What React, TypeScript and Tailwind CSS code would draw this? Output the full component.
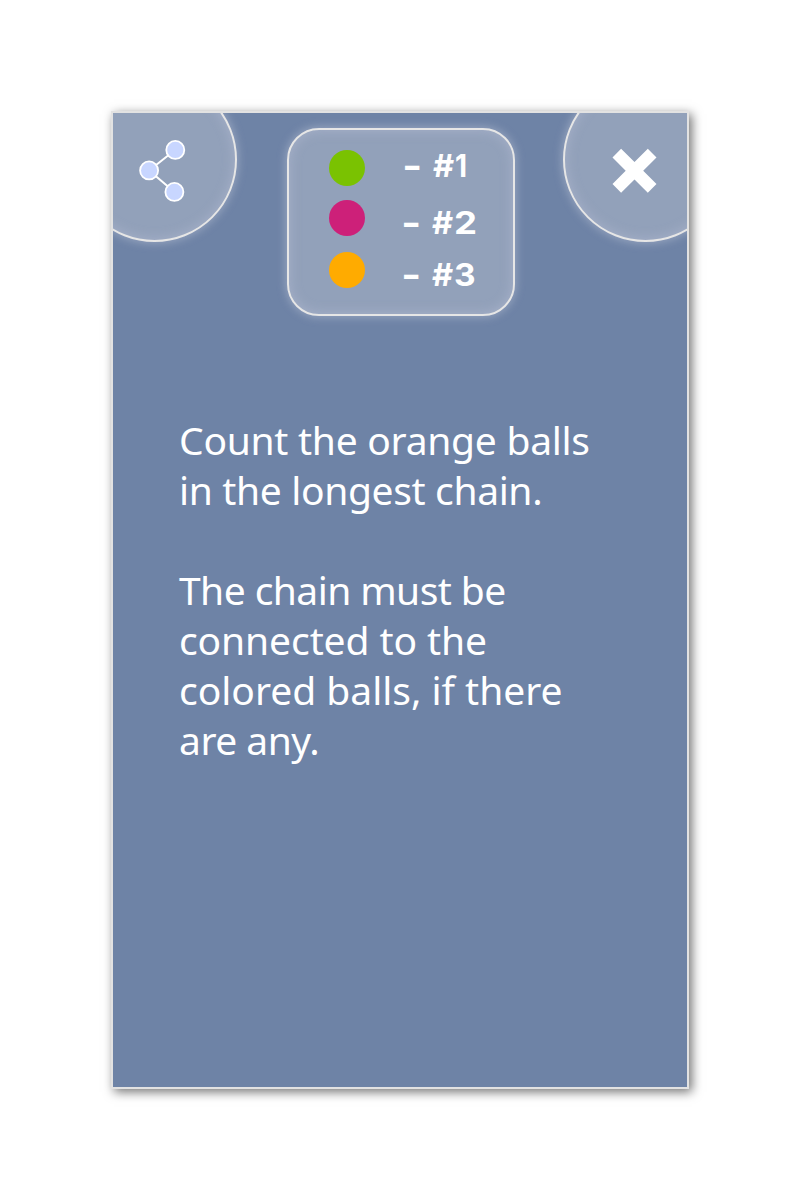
const glow =
  'border-2 border-[#e6e6e6] bg-[#92a1ba] shadow-[0_0_10px_1px_rgba(230,230,240,0.36),inset_0_0_12px_1px_rgba(190,195,220,0.42)]';

function ShareIcon() {
  return (
    <svg width="50" height="66" viewBox="137 138 50 66" aria-label="Share">
      <path d="M175.3 149.8 149.2 170.5 174.4 192" fill="none" stroke="#fff" strokeWidth="2" />
      <g fill="#c8d6ff" stroke="#fff" strokeWidth="1.8">
        <circle cx="175.3" cy="149.9" r="9" />
        <circle cx="149.1" cy="170.4" r="9" />
        <circle cx="174.4" cy="191.9" r="9" />
      </g>
    </svg>
  );
}

function CloseIcon() {
  return (
    <svg width="45" height="45" viewBox="-0.5 -0.8 45 45" aria-label="Close">
      <path
        fill="#fff"
        d="M8.6 0 22 13.2 35.3 0 44 8.6 30.7 22 44 35.3 35.3 44 22 30.7 8.6 44 0 35.3 13.2 22 0 8.6Z"
      />
    </svg>
  );
}

const scores = [
  { digit: '1', dot: 'bg-[#7ac201]', row: 'mt-[20px]', gap: 'ml-[39px] -mt-[4px]', stretch: 'scale-x-90' },
  { digit: '2', dot: 'bg-[#cd2079]', row: 'mt-[14px]', gap: 'ml-[38px] mt-[11px]', stretch: 'scale-x-[1.18]' },
  { digit: '3', dot: 'bg-[#ffab00]', row: 'mt-[16px]', gap: 'ml-[38px] mt-[11px]', stretch: 'scale-x-[1.08]' },
];

const lines = [
  { text: 'Count the orange balls', spacing: 'tracking-[-0.27px]' },
  { text: 'in the longest chain.', spacing: 'tracking-[-0.35px]' },
  { text: '\u00a0', spacing: '' },
  { text: 'The chain must be', spacing: 'tracking-[-0.57px]' },
  { text: 'connected to the', spacing: 'tracking-[-0.1px]' },
  { text: 'colored balls, if there', spacing: 'tracking-[-0.01px]' },
  { text: 'are any.', spacing: 'tracking-[-0.5px]' },
];

export default function App() {
  return (
    <main className="flex h-[1200px] w-[800px] items-center justify-center bg-white">
      <section className="h-[978px] w-[578px] overflow-hidden border-2 border-[#e2e2e2] bg-[#6e83a6] text-white shadow-[3px_3px_10px_rgba(0,0,0,0.55)]">
        <header className="flex h-[230px] items-start">
          <button
            className={`-mt-[36px] -ml-[41px] flex size-[165px] shrink-0 rounded-full pt-[59px] pl-[63px] ${glow}`}
          >
            <ShareIcon />
          </button>
          <div className={`mt-[14.5px] ml-[50px] h-[188px] w-[228px] shrink-0 rounded-[32px] ${glow}`}>
            {scores.map((s) => (
              <div key={s.digit} className={`flex h-9 items-center ${s.row}`}>
                <span className={`ml-[40px] size-9 shrink-0 rounded-full ${s.dot}`} />
                <span
                  className={`flex h-9 items-center font-[Inter,sans-serif] text-[31px] leading-9 font-bold ${s.gap}`}
                >
                  <span className="flex w-[18px] origin-left scale-x-125 font-['DejaVu_Sans',sans-serif]">
                    <span className="scale-x-120">-</span>
                  </span>
                  <span className="ml-[11px] flex w-[22px] origin-left scale-x-105">#</span>
                  <span className={`origin-left ${s.stretch}`}>{s.digit}</span>
                </span>
              </div>
            ))}
          </div>
          <button
            className={`-mt-[36px] ml-[48px] flex size-[165px] shrink-0 rounded-full pt-[69px] pl-[47px] ${glow}`}
          >
            <CloseIcon />
          </button>
        </header>
        <p className="mt-[72px] ml-[66px] font-['Noto_Sans',sans-serif] text-[39px] leading-[50px]">
          {lines.map((l, i) => (
            <span key={i} className={`block w-max whitespace-nowrap ${l.spacing}`}>
              {l.text}
            </span>
          ))}
        </p>
      </section>
    </main>
  );
}
